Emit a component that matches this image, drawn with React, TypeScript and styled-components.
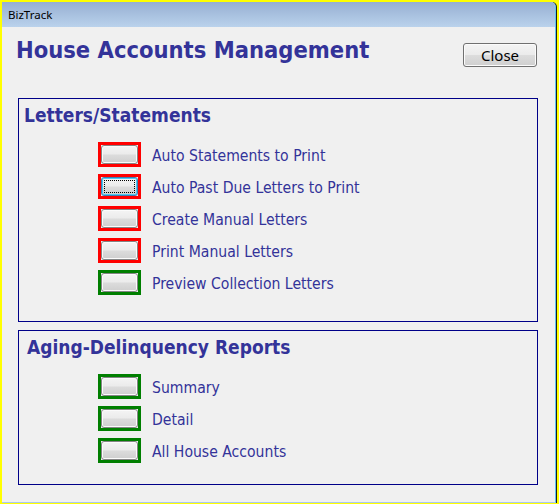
import React from "react";
import styled, { createGlobalStyle, css } from "styled-components";

const GlobalStyle = createGlobalStyle`
  html, body { margin: 0; padding: 0; background: #ffff00; }
  #root { width: 559px; height: 504px; }
`;

const Frame = styled.div`
  box-sizing: border-box;
  width: 559px;
  height: 504px;
  padding: 2px 3px 1px 2px;
  background: #ffff00;
`;

const Window = styled.div`
  box-sizing: border-box;
  height: 100%;
  display: flex;
  flex-direction: column;
  background: #f0f0f0;
  border-right: 1px solid #5cc4ee;
  border-bottom: 1px solid #a9c9ec;
  box-shadow: 1px 0 0 #1c1c1c;
  border-top-right-radius: 5px;
  overflow: hidden;
`;

const TitleBar = styled.div`
  flex: none;
  height: 25px;
  display: flex;
  align-items: center;
  padding-left: 6px;
  background: linear-gradient(#96afd2, #bad2ec);
  font: 11.5px "Noto Sans", "DejaVu Sans", sans-serif;
  color: #000;
`;

const Header = styled.div`
  flex: none;
  box-sizing: border-box;
  height: 71px;
  display: flex;
  justify-content: space-between;
  align-items: flex-start;
  padding: 0 18px 0 14px;
`;

const Heading = styled.h1`
  margin: 9px 0 0;
  font-family: "DejaVu Sans Condensed", "DejaVu Sans", sans-serif;
  font-stretch: condensed;
  font-weight: bold;
  font-size: 23.5px;
  line-height: 28px;
  color: #333399;
`;

const buttonFace = css`
  box-sizing: border-box;
  border-radius: 3px;
  background: linear-gradient(#f4f4f4 0%, #ebebeb 48%, #dcdcdc 52%, #cfcfcf 100%);
  box-shadow: inset 0 0 0 1px #fbfbfb;
`;

const CloseButton = styled.button`
  ${buttonFace};
  margin-top: 16px;
  width: 74px;
  height: 24px;
  padding: 0 0 1px;
  border: 1px solid #707070;
  font: 15px "Noto Sans", "DejaVu Sans", sans-serif;
  color: #000;
`;

const Groups = styled.div`
  display: flex;
  flex-direction: column;
  gap: 8px;
  padding: 0 17px 0 16px;
`;

const Group = styled.section<{ $padBottom: number }>`
  border: 1px solid #000088;
  padding: 5px 0 ${(p) => p.$padBottom}px;
`;

const GroupTitle = styled.h2<{ $indent: number }>`
  margin: 0;
  padding-left: ${(p) => p.$indent}px;
  font-family: "DejaVu Sans Condensed", "DejaVu Sans", sans-serif;
  font-stretch: condensed;
  font-weight: bold;
  font-size: 19px;
  line-height: 23px;
  color: #333399;
`;

const Rows = styled.div`
  margin-top: 15px;
  padding-left: 79px;
  display: flex;
  flex-direction: column;
  gap: 7px;
`;

const Row = styled.div`
  display: flex;
  align-items: center;
  gap: 11px;
  height: 25px;
`;

const Swatch = styled.div<{ $color: string }>`
  box-sizing: border-box;
  width: 43px;
  height: 25px;
  border: 3px solid ${(p) => p.$color};
  display: flex;
`;

const SmallButton = styled.button<{ $focused?: boolean }>`
  ${buttonFace};
  position: relative;
  flex: 1;
  margin: 0;
  padding: 0;
  border: 1px solid ${(p) => (p.$focused ? "#3c7fb1" : "#858585")};
  ${(p) =>
    p.$focused &&
    css`
      box-shadow: inset 0 0 0 1px #4cc8f4;
      &::after {
        content: "";
        position: absolute;
        inset: 2px;
        border: 1px dotted #000;
      }
    `}
`;

const Label = styled.span`
  font-family: "DejaVu Sans Condensed", "DejaVu Sans", sans-serif;
  font-stretch: condensed;
  font-size: 15.6px;
  line-height: 18px;
  padding-top: 3px;
  color: #333399;
`;

type Item = { label: string; color: string; focused?: boolean };

const RED = "#ff0000";
const GREEN = "#007f00";

const letters: Item[] = [
  { label: "Auto Statements to Print", color: RED },
  { label: "Auto Past Due Letters to Print", color: RED, focused: true },
  { label: "Create Manual Letters", color: RED },
  { label: "Print Manual Letters", color: RED },
  { label: "Preview Collection Letters", color: GREEN },
];

const reports: Item[] = [
  { label: "Summary", color: GREEN },
  { label: "Detail", color: GREEN },
  { label: "All House Accounts", color: GREEN },
];

const ItemRows = ({ items }: { items: Item[] }) => (
  <Rows>
    {items.map((it) => (
      <Row key={it.label}>
        <Swatch $color={it.color}>
          <SmallButton $focused={it.focused} aria-label={it.label} />
        </Swatch>
        <Label>{it.label}</Label>
      </Row>
    ))}
  </Rows>
);

export default function App() {
  return (
    <>
      <GlobalStyle />
      <Frame>
        <Window>
          <TitleBar>BizTrack</TitleBar>
          <Header>
            <Heading>House Accounts Management</Heading>
            <CloseButton>Close</CloseButton>
          </Header>
          <Groups>
            <Group $padBottom={26}>
              <GroupTitle $indent={5}>Letters/Statements</GroupTitle>
              <ItemRows items={letters} />
            </Group>
            <Group $padBottom={21}>
              <GroupTitle $indent={8}>Aging-Delinquency Reports</GroupTitle>
              <ItemRows items={reports} />
            </Group>
          </Groups>
        </Window>
      </Frame>
    </>
  );
}
